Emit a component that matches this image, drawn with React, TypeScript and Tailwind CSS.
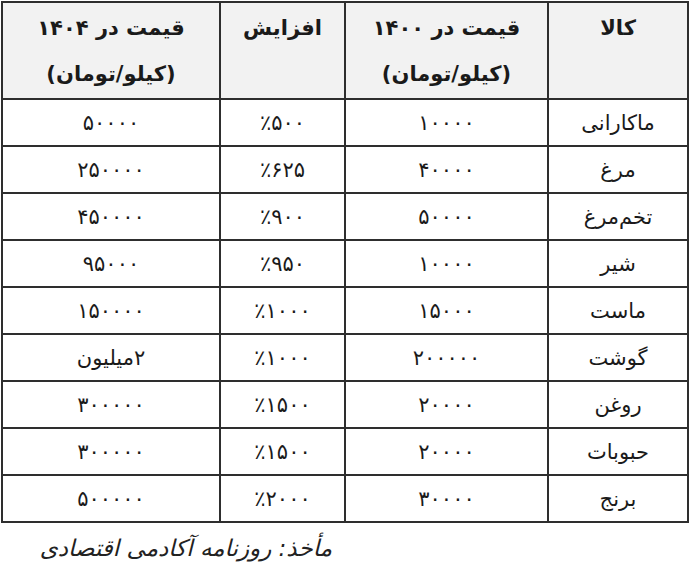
import React from "react";

const rows: [string, string, string, string][] = [
  ["ماکارانی", "۱۰۰۰۰", "٪۵۰۰", "۵۰۰۰۰"],
  ["مرغ", "۴۰۰۰۰", "٪۶۲۵", "۲۵۰۰۰۰"],
  ["تخم‌مرغ", "۵۰۰۰۰", "٪۹۰۰", "۴۵۰۰۰۰"],
  ["شیر", "۱۰۰۰۰", "٪۹۵۰", "۹۵۰۰۰"],
  ["ماست", "۱۵۰۰۰", "٪۱۰۰۰", "۱۵۰۰۰۰"],
  ["گوشت", "۲۰۰۰۰۰", "٪۱۰۰۰", "۲میلیون"],
  ["روغن", "۲۰۰۰۰", "٪۱۵۰۰", "۳۰۰۰۰۰"],
  ["حبوبات", "۲۰۰۰۰", "٪۱۵۰۰", "۳۰۰۰۰۰"],
  ["برنج", "۳۰۰۰۰", "٪۲۰۰۰", "۵۰۰۰۰۰"],
];

export default function App() {
  return (
    <div
      className="w-[690px] h-[564px] bg-white text-[#1a1a1a]"
      style={{ fontFamily: '"DejaVu Sans", "Noto Sans", sans-serif' }}
    >
      <div className="pt-[1px] pl-[1px]">
        <table dir="rtl" className="border-collapse border-2 border-[#2e2e2e]">
          <colgroup>
            <col className="w-[140px]" />
            <col className="w-[203px]" />
            <col className="w-[125px]" />
            <col className="w-[218px]" />
          </colgroup>
          <thead>
            <tr className="bg-[#f2f2f2] h-[97px]">
              <th className="border-2 border-[#2e2e2e] align-top pt-[2px] text-[21px] font-bold leading-[46px]">
                کالا
              </th>
              <th className="border-2 border-[#2e2e2e] align-top pt-[2px] text-[21px] font-bold leading-[46px]">
                <div>قیمت در ۱۴۰۰</div>
                <div>(کیلو/تومان)</div>
              </th>
              <th className="border-2 border-[#2e2e2e] align-top pt-[2px] text-[21px] font-bold leading-[46px]">
                افزایش
              </th>
              <th className="border-2 border-[#2e2e2e] align-top pt-[2px] text-[21px] font-bold leading-[46px]">
                <div>قیمت در ۱۴۰۴</div>
                <div>(کیلو/تومان)</div>
              </th>
            </tr>
          </thead>
          <tbody>
            {rows.map((r, i) => (
              <tr key={i} className="h-[47px]">
                {r.map((c, j) => (
                  <td
                    key={j}
                    className="border-2 border-[#2e2e2e] text-center align-middle text-[21px] leading-[24px] p-0"
                  >
                    {c}
                  </td>
                ))}
              </tr>
            ))}
          </tbody>
        </table>
      </div>
      <div className="w-[332px] mt-[10px]" dir="rtl">
        <div className="text-[23px] leading-[30px] italic text-[#222]">
          مأخذ: روزنامه آکادمی اقتصادی
        </div>
      </div>
    </div>
  );
}
